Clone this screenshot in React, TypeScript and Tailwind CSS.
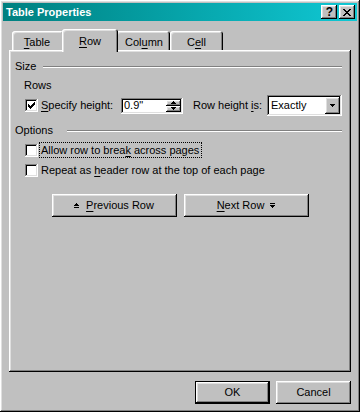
import React from 'react'

const raised = 'shadow-[inset_-1px_-1px_#000,inset_1px_1px_#fff,inset_-2px_-2px_#808080,inset_2px_2px_#dfdfdf]'
const sunken = 'shadow-[inset_-1px_-1px_#fff,inset_1px_1px_#808080,inset_-2px_-2px_#dfdfdf,inset_2px_2px_#000]'
const tabEdge = 'shadow-[inset_1px_1px_#fff,inset_-1px_0_#000,inset_-2px_0_#808080,inset_2px_2px_#dfdfdf]'

const Px = ({ r, w, h }: { r: number[][]; w: number; h: number }) => (
    <svg width={w} height={h} shapeRendering="crispEdges" className="block">
        {r.map(([x, y, rw], i) => (
            <rect key={i} x={x} y={y} width={rw} height={1} fill="#000" />
        ))}
    </svg>
)

const CheckBox = ({ checked }: { checked?: boolean }) => (
    <span className={`w-[13px] h-[13px] shrink-0 bg-white flex items-center justify-center ${sunken}`}>
        {checked && (
            <Px w={7} h={7} r={[[6, 0, 1], [5, 1, 2], [0, 2, 1], [4, 2, 3], [0, 3, 2], [3, 3, 3], [0, 4, 5], [1, 5, 3], [2, 6, 1]]} />
        )}
    </span>
)

const U = ({ children }: { children: React.ReactNode }) => (
    <span className="underline decoration-1 underline-offset-[2px]">{children}</span>
)

export default function App() {
    return (
        <div className={`w-[360px] h-[412px] bg-[#c0c0c0] p-[3px] flex flex-col text-black text-[11px] leading-[13px] font-['Liberation_Sans',Arial,sans-serif] ${raised}`}>

            {/* title bar */}
            <div className="h-[18px] shrink-0 flex items-center pl-[3px] pr-[2px] bg-linear-to-r from-[#008080] to-[#10c8d4]">
                <span className="flex-1 font-bold text-white">Table Properties</span>
                <div className="flex gap-[2px]">
                    <button className={`w-[16px] h-[14px] bg-[#c0c0c0] flex items-center justify-center font-bold text-[12px] leading-[12px] pl-[1px] ${raised}`}>?</button>
                    <button className={`w-[16px] h-[14px] bg-[#c0c0c0] flex items-center justify-center ${raised}`}>
                        <Px w={8} h={7} r={[[0, 0, 2], [6, 0, 2], [1, 1, 2], [5, 1, 2], [2, 2, 4], [3, 3, 2], [2, 4, 4], [1, 5, 2], [5, 5, 2], [0, 6, 2], [6, 6, 2]]} />
                    </button>
                </div>
            </div>

            <div className="px-[6px] flex flex-col">
                {/* tabs */}
                <div className="mt-[10px] h-[19px] flex items-end pl-[3px]">
                    <div className={`w-[52px] h-[19px] pt-[5px] pr-[2px] text-center rounded-t-[3px] ${tabEdge}`}><U>T</U>able</div>
                    <div className={`relative z-10 w-[56px] h-[23px] -mx-[2px] -mb-[2px] pt-[6px] text-center rounded-t-[3px] bg-[#c0c0c0] ${tabEdge}`}><U>R</U>ow</div>
                    <div className={`w-[54px] h-[19px] pt-[5px] pl-[2px] text-center rounded-t-[3px] ${tabEdge}`}>Col<U>u</U>mn</div>
                    <div className={`w-[53px] h-[19px] pt-[5px] text-center rounded-t-[3px] ${tabEdge}`}>C<U>e</U>ll</div>
                </div>

                {/* panel */}
                <div className={`h-[322px] flex flex-col pl-[6px] pr-[9px] ${raised}`}>
                    <div className="mt-[10px] h-[13px] flex items-center">
                        <span>Size</span>
                        <div className="flex-1 ml-[7px] h-[2px] border-t border-[#808080] border-b border-b-white"></div>
                    </div>
                    <div className="mt-[6px] ml-[9px]">Rows</div>

                    <div className="mt-[3px] h-[21px] flex items-center">
                        <div className="ml-[10px] w-[96px] flex items-center gap-[3px]">
                            <CheckBox checked />
                            <span><U>S</U>pecify height:</span>
                        </div>
                        <div className={`w-[62px] h-[16px] bg-white flex items-center p-[2px] ${sunken}`}>
                            <span className="flex-1 pl-[1px]">0.9"</span>
                            <div className="flex flex-col w-[15px] h-[12px]">
                                <div className={`h-[6px] bg-[#c0c0c0] flex items-center justify-center ${raised}`}>
                                    <Px w={5} h={3} r={[[2, 0, 1], [1, 1, 3], [0, 2, 5]]} />
                                </div>
                                <div className={`h-[6px] bg-[#c0c0c0] flex items-center justify-center ${raised}`}>
                                    <Px w={5} h={3} r={[[0, 0, 5], [1, 1, 3], [2, 2, 1]]} />
                                </div>
                            </div>
                        </div>
                        <span className="ml-[10px] w-[74px]">Row height <U>i</U>s:</span>
                        <div className={`w-[75px] h-[21px] bg-white flex items-center p-[2px] ${sunken}`}>
                            <span className="flex-1 pl-[2px]">Exactly</span>
                            <div className={`w-[15px] h-[17px] bg-[#c0c0c0] flex items-center justify-center ${raised}`}>
                                <Px w={5} h={3} r={[[0, 0, 5], [1, 1, 3], [2, 2, 1]]} />
                            </div>
                        </div>
                    </div>

                    <div className="mt-[8px] h-[13px] flex items-center">
                        <span>Options</span>
                        <div className="flex-1 ml-[14px] h-[2px] border-t border-[#808080] border-b border-b-white"></div>
                    </div>

                    <div className="mt-[5px] ml-[10px] h-[16px] flex items-center gap-[1px]">
                        <CheckBox />
                        <span className="h-[16px] flex items-center border border-dotted border-black pl-[1px] pr-[2px]">
                            <span>Allow row to brea<U>k</U> across pages</span>
                        </span>
                    </div>
                    <div className="mt-[4px] ml-[10px] h-[16px] flex items-center gap-[1px]">
                        <CheckBox />
                        <span className="h-[16px] flex items-center border border-transparent pl-[1px]">
                            <span>Repeat as <U>h</U>eader row at the top of each page</span>
                        </span>
                    </div>

                    <div className="mt-[16px] -ml-[6px] -mr-[9px] flex justify-center gap-[7px]">
                        <button className={`w-[125px] h-[23px] bg-[#c0c0c0] flex items-center justify-center gap-[7px] ${raised}`}>
                            <Px w={5} h={5} r={[[2, 0, 1], [1, 1, 3], [0, 2, 5], [0, 4, 5]]} />
                            <span><U>P</U>revious Row</span>
                        </button>
                        <button className={`w-[125px] h-[23px] bg-[#c0c0c0] flex items-center justify-center gap-[6px] ${raised}`}>
                            <span><U>N</U>ext Row</span>
                            <Px w={5} h={5} r={[[0, 0, 5], [0, 2, 5], [1, 3, 3], [2, 4, 1]]} />
                        </button>
                    </div>
                </div>
            </div>

            {/* dialog buttons */}
            <div className="mt-[9px] pr-[6px] flex justify-end gap-[6px]">
                <button className={`w-[75px] h-[23px] bg-[#c0c0c0] border border-black ${raised}`}>OK</button>
                <button className={`w-[75px] h-[23px] bg-[#c0c0c0] ${raised}`}>Cancel</button>
            </div>
        </div>
    )
}
